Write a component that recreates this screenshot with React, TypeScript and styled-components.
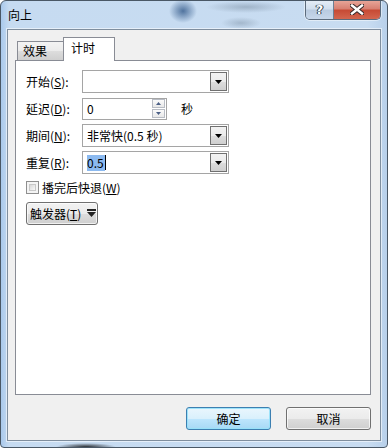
import React from "react";
import styled, {createGlobalStyle} from "styled-components";

const GlobalStyle = createGlobalStyle`
  html, body {
    margin: 0;
    padding: 0;
    background: #ffffff;
  }
  body {
    font-family: "Noto Sans CJK SC", "Noto Sans", sans-serif;
    font-size: 12px;
    color: #000;
  }
`;

const Window = styled.div`
  box-sizing: border-box;
  width: 388px;
  height: 448px;
  display: flex;
  flex-direction: column;
  border: 1px solid #4a5866;
  border-radius: 6px 6px 4px 4px;
  overflow: hidden;
  background:
    radial-gradient(ellipse 14px 12px at 182px 10px, rgba(40, 80, 130, 0.75), transparent),
    radial-gradient(ellipse 40px 6px at 245px 6px, rgba(110, 130, 150, 0.45), transparent),
    radial-gradient(ellipse 20px 6px at 240px 22px, rgba(110, 130, 150, 0.4), transparent),
    radial-gradient(ellipse 30px 4px at 85px 446px, rgba(0, 0, 0, 0.8), transparent),
    linear-gradient(to right, #a9c9ec 0px, #c6dbf1 8px, #c8dcf1 95%, #b8d0ea 100%);
`;

const TitleBar = styled.div`
  height: 28px;
  display: flex;
  align-items: flex-start;
  padding-left: 7px;
  flex-shrink: 0;
`;

const Title = styled.div`
  flex: 1;
  line-height: 28px;
  font-size: 12px;
  color: #000;
`;

const CaptionGroup = styled.div`
  display: flex;
  margin-right: 6px;
  margin-top: -1px;
  border: 1px solid #5c6b7c;
  border-top: none;
  border-radius: 0 0 5px 5px;
  overflow: hidden;
  box-shadow: 0 0 0 1px rgba(255, 255, 255, 0.45);
`;

const CaptionButton = styled.div<{$close?: boolean}>`
  width: ${(p) => (p.$close ? 46 : 27)}px;
  height: 19px;
  display: flex;
  align-items: center;
  justify-content: center;
  background: ${(p) =>
    p.$close
      ? "linear-gradient(to bottom, #e9a99c 0%, #d88173 45%, #c74b35 55%, #d3664f 100%)"
      : "linear-gradient(to bottom, #e6eef7 0%, #d2dfee 45%, #b9cbe0 55%, #c7d7ea 100%)"};
  border-right: ${(p) => (p.$close ? "none" : "1px solid #6e7f93")};
  color: #fff;
  font-family: "DejaVu Sans", sans-serif;
  font-weight: bold;
  font-size: 13px;
  text-shadow: 0 0 1px #2c3a4a, 0 0 1px #2c3a4a, 1px 0 0 #2c3a4a, -1px 0 0 #2c3a4a;
`;

const Client = styled.div`
  flex: 1;
  margin: 0 6px 6px 6px;
  border: 1px solid #7f8e9e;
  box-shadow: 0 0 0 1px rgba(255, 255, 255, 0.55);
  background: #f0f0f0;
  display: flex;
  flex-direction: column;
  padding: 8px 9px 0 7px;
`;

const TabStrip = styled.div`
  display: flex;
  align-items: flex-end;
  height: 23px;
  padding-left: 2px;
  margin-bottom: -1px;
  position: relative;
  z-index: 1;
`;

const Tab = styled.div<{$active?: boolean}>`
  box-sizing: border-box;
  width: ${(p) => (p.$active ? 52 : 46)}px;
  height: ${(p) => (p.$active ? 24 : 20)}px;
  border: 1px solid #898c95;
  border-bottom: ${(p) => (p.$active ? "none" : "1px solid #898c95")};
  border-right: ${(p) => (p.$active ? "1px solid #898c95" : "none")};
  background: ${(p) =>
    p.$active ? "#ffffff" : "linear-gradient(to bottom, #f3f3f3 0%, #ebebeb 50%, #dddddd 51%, #cfcfcf 100%)"};
  padding-left: ${(p) => (p.$active ? 7 : 5)}px;
  line-height: ${(p) => (p.$active ? 20 : 18)}px;
`;

const Panel = styled.div`
  box-sizing: border-box;
  width: 356px;
  height: 335px;
  border: 1px solid #898c95;
  background: #fff;
  padding: 9px 0 0 10px;
`;

const Form = styled.div`
  display: grid;
  grid-template-columns: 56px auto;
  row-gap: 4px;
  align-items: center;
`;

const Label = styled.div`
  line-height: 23px;
  white-space: nowrap;
`;

const Key = styled.span`
  text-decoration: underline;
  text-underline-offset: 1px;
`;

const Combo = styled.div`
  box-sizing: border-box;
  width: 147px;
  height: 23px;
  border: 1px solid #abadb3;
  border-color: #abadb3 #e3e9ef #e3e9ef #abadb3;
  outline: 1px solid transparent;
  background: #fff;
  display: flex;
  align-items: center;
  padding: 1px 1px 1px 4px;
  box-shadow: inset 0 0 0 0 transparent;
  border: 1px solid #a5a5a5;
`;

const ComboText = styled.div`
  flex: 1;
  display: flex;
  align-items: center;
  line-height: 16px;
`;

const Selected = styled.span`
  background: #8cbaf0;
  padding-right: 1px;
`;

const Caret = styled.span`
  display: inline-block;
  width: 1px;
  height: 15px;
  background: #000;
`;

const DropButton = styled.div`
  box-sizing: border-box;
  width: 17px;
  height: 19px;
  border: 1px solid #707070;
  background: linear-gradient(to bottom, #f2f2f2 0%, #ebebeb 50%, #dddddd 51%, #cfcfcf 100%);
  display: flex;
  align-items: center;
  justify-content: center;
`;

const SpinRow = styled.div`
  display: flex;
  align-items: center;
`;

const SpinBox = styled.div`
  box-sizing: border-box;
  width: 85px;
  height: 22px;
  border: 1px solid #a5a5a5;
  background: #fff;
  display: flex;
  align-items: center;
  padding: 0 1px 0 4px;
`;

const SpinButtons = styled.div`
  display: flex;
  flex-direction: column;
  gap: 1px;
`;

const SpinButton = styled.div`
  box-sizing: border-box;
  width: 13px;
  height: 9px;
  border: 1px solid #b8bcc4;
  background: linear-gradient(to bottom, #fbfbfb, #e8e8e8);
  display: flex;
  align-items: center;
  justify-content: center;
`;

const Unit = styled.div`
  margin-left: 14px;
`;

const CheckRow = styled.label`
  display: flex;
  align-items: center;
  margin-top: 7px;
  height: 13px;
`;

const CheckBox = styled.span`
  box-sizing: border-box;
  width: 13px;
  height: 13px;
  border: 1px solid #8f8f8f;
  background: #f4f4f4;
  padding: 2px;
  display: inline-flex;
  &::after {
    content: "";
    flex: 1;
    border: 1px solid #c8c8c8;
    background: linear-gradient(135deg, #d8d8d8, #f8f8f8);
  }
`;

const CheckText = styled.span`
  margin-left: 3px;
`;

const PushButton = styled.div<{$default?: boolean; $width: number}>`
  box-sizing: border-box;
  width: ${(p) => p.$width}px;
  height: 23px;
  border: 1px solid ${(p) => (p.$default ? "#3c7fb1" : "#707070")};
  border-radius: 3px;
  background: ${(p) =>
    p.$default
      ? "linear-gradient(to bottom, #eaf6fd 0%, #d9f0fc 50%, #bee6fd 51%, #a7d9f5 100%)"
      : "linear-gradient(to bottom, #f2f2f2 0%, #ebebeb 50%, #dddddd 51%, #cfcfcf 100%)"};
  box-shadow: inset 0 0 0 1px ${(p) => (p.$default ? "rgba(150, 225, 250, 0.9)" : "rgba(255, 255, 255, 0.7)")};
  display: flex;
  align-items: center;
  justify-content: center;
  gap: 6px;
  line-height: 21px;
`;

const TriggerButton = styled(PushButton)`
  margin-top: 8px;
  justify-content: flex-start;
  padding-left: 3px;
`;

const Footer = styled.div`
  display: flex;
  justify-content: flex-end;
  gap: 15px;
  margin-top: 12px;
  width: 356px;
`;

const DownArrow = () => (
  <svg width="7" height="4" viewBox="0 0 7 4">
    <polygon points="0,0 7,0 3.5,4" fill="#000" />
  </svg>
);

const SpinArrow = ({up}: {up?: boolean}) => (
  <svg width="5" height="3" viewBox="0 0 5 3">
    <polygon points={up ? "0,3 5,3 2.5,0" : "0,0 5,0 2.5,3"} fill="#4b5f86" />
  </svg>
);

const MoreArrow = () => (
  <svg width="9" height="9" viewBox="0 0 9 9">
    <rect x="0" y="0" width="9" height="2" fill="#222" />
    <polygon points="0,3 9,3 4.5,8" fill="#222" />
  </svg>
);

const CloseGlyph = () => (
  <svg width="14" height="11" viewBox="0 0 14 11">
    <path d="M2 1.5 L12 9.5 M12 1.5 L2 9.5" stroke="#3a2a2a" strokeWidth="4.5" strokeLinecap="square" />
    <path d="M2 1.5 L12 9.5 M12 1.5 L2 9.5" stroke="#ffffff" strokeWidth="2.4" strokeLinecap="square" />
  </svg>
);

const ComboBox = ({children}: {children?: React.ReactNode}) => (
  <Combo>
    <ComboText>{children}</ComboText>
    <DropButton>
      <DownArrow />
    </DropButton>
  </Combo>
);

export default function App() {
  return (
    <>
      <GlobalStyle />
      <Window>
        <TitleBar>
          <Title>向上</Title>
          <CaptionGroup>
            <CaptionButton>?</CaptionButton>
            <CaptionButton $close>
              <CloseGlyph />
            </CaptionButton>
          </CaptionGroup>
        </TitleBar>
        <Client>
          <TabStrip>
            <Tab>效果</Tab>
            <Tab $active>计时</Tab>
          </TabStrip>
          <Panel>
            <Form>
              <Label>
                开始(<Key>S</Key>):
              </Label>
              <ComboBox />

              <Label>
                延迟(<Key>D</Key>):
              </Label>
              <SpinRow>
                <SpinBox>
                  <ComboText>0</ComboText>
                  <SpinButtons>
                    <SpinButton>
                      <SpinArrow up />
                    </SpinButton>
                    <SpinButton>
                      <SpinArrow />
                    </SpinButton>
                  </SpinButtons>
                </SpinBox>
                <Unit>秒</Unit>
              </SpinRow>

              <Label>
                期间(<Key>N</Key>):
              </Label>
              <ComboBox>非常快(0.5 秒)</ComboBox>

              <Label>
                重复(<Key>R</Key>):
              </Label>
              <ComboBox>
                <Selected>0.5</Selected>
                <Caret />
              </ComboBox>
            </Form>

            <CheckRow>
              <CheckBox />
              <CheckText>
                播完后快退(<Key>W</Key>)
              </CheckText>
            </CheckRow>

            <TriggerButton $width={72}>
              <span>
                触发器(<Key>T</Key>)
              </span>
              <MoreArrow />
            </TriggerButton>
          </Panel>
          <Footer>
            <PushButton $default $width={85}>
              确定
            </PushButton>
            <PushButton $width={85}>取消</PushButton>
          </Footer>
        </Client>
      </Window>
    </>
  );
}
